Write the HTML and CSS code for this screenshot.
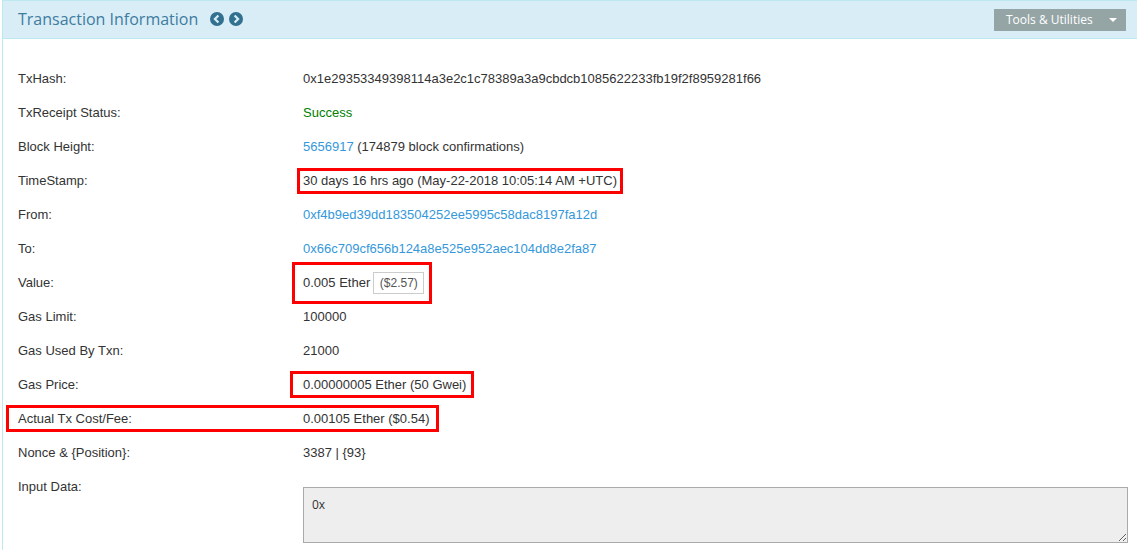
FILE: index.html
```html
<!DOCTYPE html>
<html lang="en">
<head>
<meta charset="utf-8">
<title>Transaction Information</title>
<link rel="stylesheet" href="styles.css">
</head>
<body>
<main class="panel">
  <header class="panel-head">
    <div class="head-left">
      <h1 class="title">Transaction Information</h1>
      <svg class="nav-icon" viewBox="0 0 14 14"><circle cx="7" cy="7" r="7" fill="#31708f"/><path d="M8.4 3.4 4.9 7l3.5 3.6" fill="none" stroke="#d9edf7" stroke-width="2.2"/></svg>
      <svg class="nav-icon" viewBox="0 0 14 14"><circle cx="7" cy="7" r="7" fill="#31708f"/><path d="M5.6 3.4 9.1 7l-3.5 3.6" fill="none" stroke="#d9edf7" stroke-width="2.2"/></svg>
    </div>
    <button class="tools" type="button"><span>Tools &amp; Utilities</span><i class="caret"></i></button>
  </header>
  <section class="rows">
    <div class="row"><div class="label">TxHash:</div><div class="value">0x1e29353349398114a3e2c1c78389a3a9cbdcb1085622233fb19f2f8959281f66</div></div>
    <div class="row"><div class="label">TxReceipt Status:</div><div class="value success">Success</div></div>
    <div class="row"><div class="label">Block Height:</div><div class="value"><a href="#">5656917</a> (174879 block confirmations)</div></div>
    <div class="row"><div class="label">TimeStamp:</div><div class="value">30 days 16 hrs ago (May-22-2018 10:05:14 AM +UTC)</div></div>
    <div class="row"><div class="label">From:</div><div class="value"><a href="#">0xf4b9ed39dd183504252ee5995c58dac8197fa12d</a></div></div>
    <div class="row"><div class="label">To:</div><div class="value"><a href="#">0x66c709cf656b124a8e525e952aec104dd8e2fa87</a></div></div>
    <div class="row"><div class="label">Value:</div><div class="value">0.005 Ether <span class="price">($2.57)</span></div></div>
    <div class="row"><div class="label">Gas Limit:</div><div class="value">100000</div></div>
    <div class="row"><div class="label">Gas Used By Txn:</div><div class="value">21000</div></div>
    <div class="row"><div class="label">Gas Price:</div><div class="value">0.00000005 Ether (50 Gwei)</div></div>
    <div class="row"><div class="label">Actual Tx Cost/Fee:</div><div class="value">0.00105 Ether ($0.54)</div></div>
    <div class="row"><div class="label">Nonce &amp; {Position}:</div><div class="value">3387 | {93}</div></div>
    <div class="row row-input"><div class="label">Input Data:</div><div class="value"><textarea class="input-data" readonly>0x</textarea></div></div>
  </section>
  <div class="mark mark-time"></div>
  <div class="mark mark-value"></div>
  <div class="mark mark-gas"></div>
  <div class="mark mark-fee"></div>
</main>
</body>
</html>
```
FILE: styles.css
```css
* { box-sizing: border-box; }
html, body { margin: 0; height: 550px; overflow: hidden; background: #fff; }
body { font-family: "Liberation Sans", Arial, sans-serif; font-size: 13px; color: #333; }
.panel { position: relative; height: 550px; padding-left: 2px; }
.panel::before { content: ""; position: absolute; left: 2px; top: 0; bottom: 0; width: 1px; background: #bce8f1; }
.panel-head { height: 39px; display: flex; align-items: center; justify-content: space-between; padding: 0 11px 0 15px; background: #d9edf7; border: 1px solid #bce8f1; border-right: 0; }
.head-left { display: flex; align-items: center; margin-top: -1px; }
.title { margin: 0 12px 0 0; font-family: "Open Sans", sans-serif; font-size: 16px; font-weight: 400; color: #3e7ca0; }
.nav-icon { width: 14px; height: 14px; margin-right: 5px; }
.tools { width: 132px; height: 22px; display: flex; align-items: center; justify-content: space-between; padding: 0 9px 0 12px; border: 0; background: #95a5a6; color: #fff; font-family: "Open Sans", sans-serif; font-size: 12px; }
.caret { width: 0; height: 0; border-left: 4px solid transparent; border-right: 4px solid transparent; border-top: 4px solid #fff; }
.rows { padding: 22px 9px 0 16px; }
.row { display: grid; grid-template-columns: 285px 1fr; height: 34px; align-items: center; }
.row-input { align-items: start; height: 70px; padding-top: 10px; }
.success { color: #008000; }
a { color: #3498db; text-decoration: none; }
.price { display: inline-block; margin: -4px 0 -4px -1px; padding: 3px 5px 3px 6px; border: 1px solid #ccc; font-size: 12px; color: #555; line-height: 14px; }
.input-data { display: block; width: 825px; height: 56px; margin-top: 8px; padding: 8px; background: #eee; border: 1px solid #aaa; color: #333; font-family: "Open Sans", sans-serif; font-size: 12px; resize: both; outline: 0; }
.mark { position: absolute; border: 3px solid #f00; pointer-events: none; }
.mark-time { left: 297px; top: 168px; width: 326px; height: 26px; }
.mark-value { left: 292px; top: 262px; width: 140px; height: 42px; }
.mark-gas { left: 290px; top: 371px; width: 184px; height: 27px; }
.mark-fee { left: 6px; top: 405px; width: 433px; height: 27px; }
```
